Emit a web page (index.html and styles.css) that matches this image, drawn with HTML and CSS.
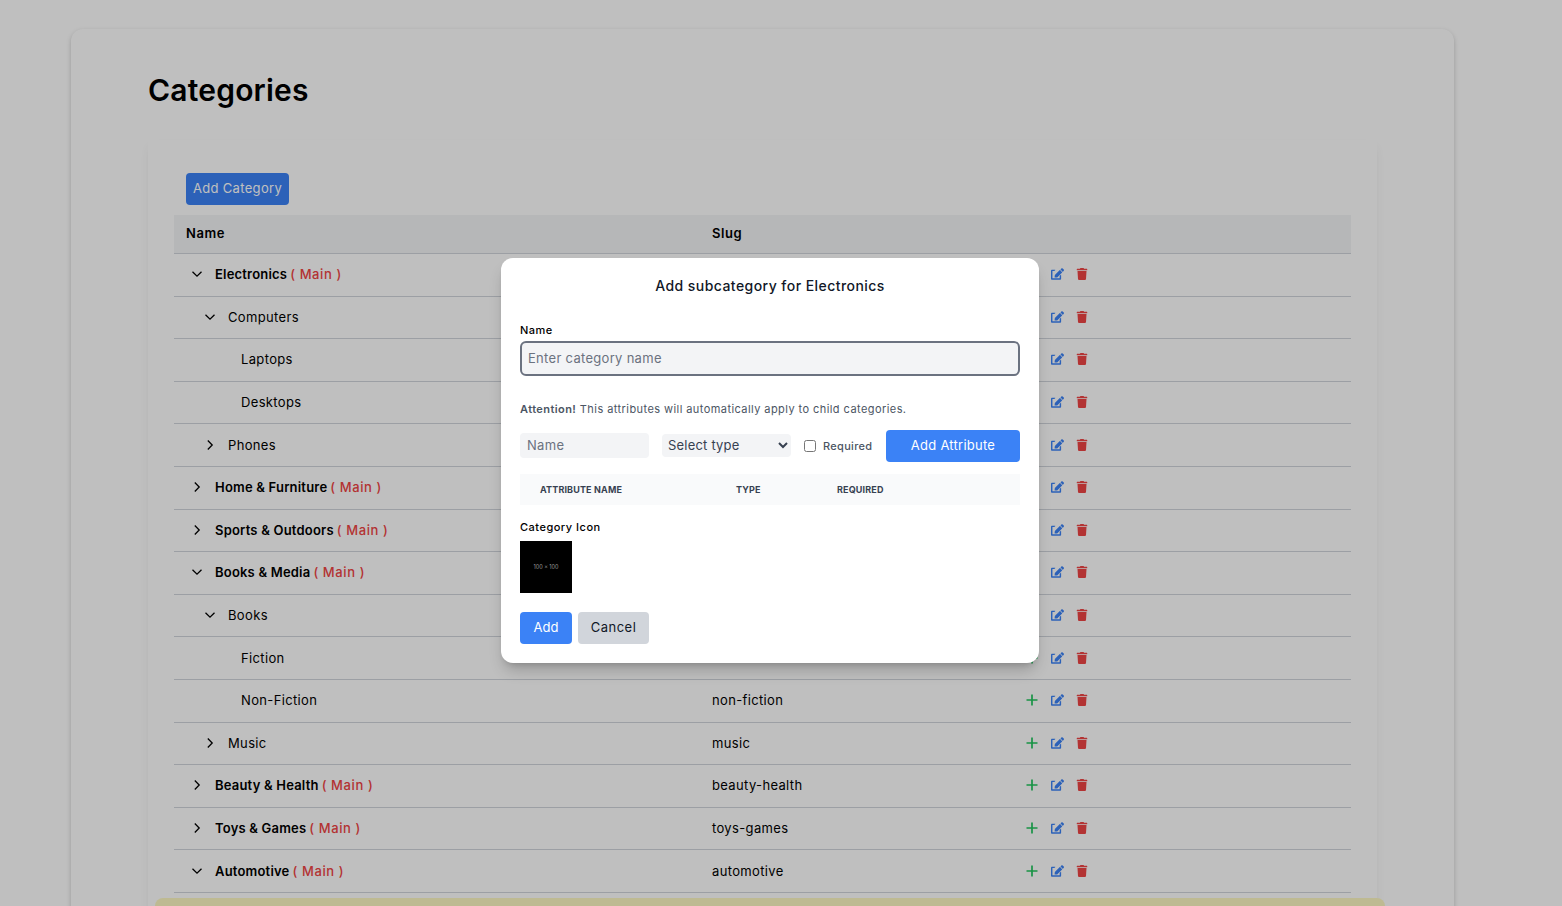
FILE: index.html
```html
<!DOCTYPE html>
<html lang="en">
<head>
<meta charset="utf-8">
<title>Categories</title>
<link rel="stylesheet" href="styles.css">
</head>
<body>
<svg class="defs" aria-hidden="true">
  <symbol id="i-plus" viewBox="0 0 12 12"><path d="M6 .5v11M.5 6h11" fill="none" stroke="currentColor" stroke-width="1.7"/></symbol>
  <symbol id="i-edit" viewBox="0 0 576 512"><path fill="currentColor" d="M402.6 83.2l90.2 90.2c3.8 3.8 3.8 10 0 13.8L274.4 405.6l-92.8 10.3c-12.4 1.4-22.9-9.1-21.5-21.5l10.3-92.8L388.8 83.2c3.8-3.8 10-3.8 13.8 0zm162-22.9l-48.8-48.8c-15.2-15.2-39.9-15.2-55.2 0l-35.4 35.4c-3.8 3.8-3.8 10 0 13.8l90.2 90.2c3.8 3.8 10 3.8 13.8 0l35.4-35.4c15.2-15.3 15.2-40 0-55.2zM384 346.2V448H64V128h73.1c3.2 0 6.2-1.3 8.5-3.5l40-40c7.6-7.6 2.2-20.5-8.5-20.5H48C21.5 64 0 85.5 0 112v352c0 26.5 21.5 48 48 48h352c26.5 0 48-21.5 48-48V306.2c0-10.7-12.9-16-20.5-8.5l-40 40c-2.2 2.3-3.5 5.3-3.5 8.5z"/></symbol>
  <symbol id="i-trash" viewBox="0 0 448 512"><path fill="currentColor" d="M432 32H312l-9.4-18.7A24 24 0 0 0 281.1 0H166.8a23.72 23.72 0 0 0-21.4 13.3L136 32H16A16 16 0 0 0 0 48v32a16 16 0 0 0 16 16h416a16 16 0 0 0 16-16V48a16 16 0 0 0-16-16zM53.2 467a48 48 0 0 0 47.9 45h245.8a48 48 0 0 0 47.9-45L416 128H32z"/></symbol>
  <symbol id="i-down" viewBox="0 0 12 12"><path d="M1.5 3.8 6 8.2l4.5-4.4" fill="none" stroke="currentColor" stroke-width="1.3"/></symbol>
  <symbol id="i-right" viewBox="0 0 12 12"><path d="M3.8 1.5 8.2 6l-4.4 4.5" fill="none" stroke="currentColor" stroke-width="1.3"/></symbol>
</svg>

<main class="page-card">
  <h1 class="page-title">Categories</h1>
  <section class="table-card">
    <button class="btn btn-blue add-category">Add Category</button>
    <table class="cat-table">
      <colgroup><col class="col-name"><col class="col-slug"><col></colgroup>
      <thead><tr><th>Name</th><th>Slug</th><th></th></tr></thead>
      <tbody>
        <tr><td><div class="cell lvl0"><svg class="chev"><use href="#i-down"/></svg><strong>Electronics</strong><span class="main-tag">( Main )</span></div></td><td>electronics</td><td><div class="acts"><svg class="plus"><use href="#i-plus"/></svg><svg class="edit"><use href="#i-edit"/></svg><svg class="trash"><use href="#i-trash"/></svg></div></td></tr>
        <tr><td><div class="cell lvl1"><svg class="chev"><use href="#i-down"/></svg><span>Computers</span></div></td><td>computers</td><td><div class="acts"><svg class="plus"><use href="#i-plus"/></svg><svg class="edit"><use href="#i-edit"/></svg><svg class="trash"><use href="#i-trash"/></svg></div></td></tr>
        <tr><td><div class="cell lvl2"><span>Laptops</span></div></td><td>laptops</td><td><div class="acts"><svg class="plus"><use href="#i-plus"/></svg><svg class="edit"><use href="#i-edit"/></svg><svg class="trash"><use href="#i-trash"/></svg></div></td></tr>
        <tr><td><div class="cell lvl2"><span>Desktops</span></div></td><td>desktops</td><td><div class="acts"><svg class="plus"><use href="#i-plus"/></svg><svg class="edit"><use href="#i-edit"/></svg><svg class="trash"><use href="#i-trash"/></svg></div></td></tr>
        <tr><td><div class="cell lvl1"><svg class="chev"><use href="#i-right"/></svg><span>Phones</span></div></td><td>phones</td><td><div class="acts"><svg class="plus"><use href="#i-plus"/></svg><svg class="edit"><use href="#i-edit"/></svg><svg class="trash"><use href="#i-trash"/></svg></div></td></tr>
        <tr><td><div class="cell lvl0"><svg class="chev"><use href="#i-right"/></svg><strong>Home &amp; Furniture</strong><span class="main-tag">( Main )</span></div></td><td>home-furniture</td><td><div class="acts"><svg class="plus"><use href="#i-plus"/></svg><svg class="edit"><use href="#i-edit"/></svg><svg class="trash"><use href="#i-trash"/></svg></div></td></tr>
        <tr><td><div class="cell lvl0"><svg class="chev"><use href="#i-right"/></svg><strong>Sports &amp; Outdoors</strong><span class="main-tag">( Main )</span></div></td><td>sports-outdoors</td><td><div class="acts"><svg class="plus"><use href="#i-plus"/></svg><svg class="edit"><use href="#i-edit"/></svg><svg class="trash"><use href="#i-trash"/></svg></div></td></tr>
        <tr><td><div class="cell lvl0"><svg class="chev"><use href="#i-down"/></svg><strong>Books &amp; Media</strong><span class="main-tag">( Main )</span></div></td><td>books-media</td><td><div class="acts"><svg class="plus"><use href="#i-plus"/></svg><svg class="edit"><use href="#i-edit"/></svg><svg class="trash"><use href="#i-trash"/></svg></div></td></tr>
        <tr><td><div class="cell lvl1"><svg class="chev"><use href="#i-down"/></svg><span>Books</span></div></td><td>books</td><td><div class="acts"><svg class="plus"><use href="#i-plus"/></svg><svg class="edit"><use href="#i-edit"/></svg><svg class="trash"><use href="#i-trash"/></svg></div></td></tr>
        <tr><td><div class="cell lvl2"><span>Fiction</span></div></td><td>fiction</td><td><div class="acts"><svg class="plus"><use href="#i-plus"/></svg><svg class="edit"><use href="#i-edit"/></svg><svg class="trash"><use href="#i-trash"/></svg></div></td></tr>
        <tr><td><div class="cell lvl2"><span>Non-Fiction</span></div></td><td>non-fiction</td><td><div class="acts"><svg class="plus"><use href="#i-plus"/></svg><svg class="edit"><use href="#i-edit"/></svg><svg class="trash"><use href="#i-trash"/></svg></div></td></tr>
        <tr><td><div class="cell lvl1"><svg class="chev"><use href="#i-right"/></svg><span>Music</span></div></td><td>music</td><td><div class="acts"><svg class="plus"><use href="#i-plus"/></svg><svg class="edit"><use href="#i-edit"/></svg><svg class="trash"><use href="#i-trash"/></svg></div></td></tr>
        <tr><td><div class="cell lvl0"><svg class="chev"><use href="#i-right"/></svg><strong>Beauty &amp; Health</strong><span class="main-tag">( Main )</span></div></td><td>beauty-health</td><td><div class="acts"><svg class="plus"><use href="#i-plus"/></svg><svg class="edit"><use href="#i-edit"/></svg><svg class="trash"><use href="#i-trash"/></svg></div></td></tr>
        <tr><td><div class="cell lvl0"><svg class="chev"><use href="#i-right"/></svg><strong>Toys &amp; Games</strong><span class="main-tag">( Main )</span></div></td><td>toys-games</td><td><div class="acts"><svg class="plus"><use href="#i-plus"/></svg><svg class="edit"><use href="#i-edit"/></svg><svg class="trash"><use href="#i-trash"/></svg></div></td></tr>
        <tr><td><div class="cell lvl0"><svg class="chev"><use href="#i-down"/></svg><strong>Automotive</strong><span class="main-tag">( Main )</span></div></td><td>automotive</td><td><div class="acts"><svg class="plus"><use href="#i-plus"/></svg><svg class="edit"><use href="#i-edit"/></svg><svg class="trash"><use href="#i-trash"/></svg></div></td></tr>
      </tbody>
    </table>
  </section>
</main>

<div class="notice"></div>
<div class="overlay"></div>

<form class="modal">
  <h2 class="modal-title">Add subcategory for Electronics</h2>
  <label class="field-label" for="cat-name">Name</label>
  <input id="cat-name" class="name-input" type="text" placeholder="Enter category name">
  <p class="attention"><b>Attention!</b> This attributes will automatically apply to child categories.</p>
  <div class="attr-row">
    <input class="attr-name" type="text" placeholder="Name">
    <select class="attr-type"><option>Select type</option></select>
    <label class="req"><input type="checkbox" class="req-box"><span>Required</span></label>
    <button type="button" class="btn btn-modal add-attr">Add Attribute</button>
  </div>
  <div class="attr-head"><span class="ah-name">Attribute Name</span><span class="ah-type">Type</span><span>Required</span></div>
  <div class="field-label icon-label">Category Icon</div>
  <div class="thumb">100 × 100</div>
  <div class="modal-actions">
    <button type="button" class="btn btn-modal add-btn">Add</button>
    <button type="button" class="btn cancel-btn">Cancel</button>
  </div>
</form>
</body>
</html>
```
FILE: styles.css
```css
html, body { margin: 0; height: 100%; overflow: hidden; }
body { background: #fff; font-family: Inter, "Noto Sans", sans-serif; color: #000; position: relative; }
.defs { position: absolute; width: 0; height: 0; }
.page-card { width: 1383px; margin: 29px 0 0 71px; padding: 42px 77px 0; box-sizing: border-box; background: #fff; border-radius: 12px; box-shadow: 0 2px 5px rgba(0,0,0,.2); height: 1200px; }
.page-title { margin: 0; font-size: 30px; line-height: 38px; font-weight: 600; letter-spacing: .2px; }
.table-card { margin-top: 31px; width: 1229px; box-sizing: border-box; padding: 33px 26px 0; box-shadow: 0 6px 10px -2px rgba(0,0,0,.08); height: 1000px; }
.btn { border: 0; font-family: inherit; cursor: pointer; border-radius: 4px; padding: 0 0 2px; }
.btn-blue { background: #3b82f6; color: #fff; }
.add-category { display: block; margin-left: 12px; width: 103px; height: 32px; font-size: 13px; letter-spacing: .33px; }
.cat-table { margin-top: 10px; width: 1177px; border-collapse: collapse; table-layout: fixed; font-size: 13px; letter-spacing: .35px; }
.col-name { width: 526px; }
.col-slug { width: 314px; }
.cat-table th { height: 36px; padding: 0 12px 2px; text-align: left; font-weight: 600; background: #f3f4f6; border-bottom: 1px solid #d1d5db; letter-spacing: .6px; }
.cat-table td { height: 40.6px; padding: 0 12px 1px; border-bottom: 1px solid #d1d5db; }
.cell { display: flex; align-items: center; }
.cell strong { font-weight: 600; letter-spacing: .2px; }
.lvl0 { padding-left: 5px; }
.lvl1 { padding-left: 18px; }
.lvl2 { padding-left: 55px; }
.chev { width: 12px; height: 12px; margin-right: 12px; flex: none; }
.main-tag { margin-left: 3px; color: #ef4444; font-weight: 500; letter-spacing: .6px; }
.acts { display: flex; align-items: center; gap: 12.5px; }
.plus { width: 12px; height: 12px; color: #22c55e; }
.edit { width: 13px; height: 12px; color: #3b82f6; }
.trash { width: 12px; height: 12px; color: #ef4444; }
.notice { position: absolute; left: 155px; top: 898px; width: 1230px; height: 40px; background: #fef9c3; border-radius: 8px 8px 0 0; }
.overlay { position: absolute; inset: 0; background: rgba(0,0,0,.25); }
.modal { position: absolute; left: 501px; top: 258px; width: 538px; height: 405px; box-sizing: border-box; padding: 18px 19px 0; background: #fff; border-radius: 12px; box-shadow: 0 10px 15px -3px rgba(0,0,0,.2), 0 4px 6px -4px rgba(0,0,0,.2); color: #111827; }
.modal-title { margin: 0; font-size: 14px; line-height: 20px; font-weight: 500; text-align: center; letter-spacing: .45px; }
.field-label { display: block; margin-top: 26px; font-size: 11px; line-height: 16px; font-weight: 500; color: #000; letter-spacing: .5px; }
.name-input { display: block; width: 500px; height: 35px; margin-top: 3px; box-sizing: border-box; padding: 0 6px 2px; border: 2px solid #6b7280; border-radius: 6px; background: #f3f4f6; font: 13px Inter, sans-serif; letter-spacing: .3px; outline: none; }
.name-input::placeholder, .attr-name::placeholder { color: #6b7280; opacity: 1; }
.attention { margin: 25px 0 0; font-size: 11px; line-height: 16px; color: #4b5563; letter-spacing: .43px; }
.attention b { font-weight: 600; }
.attr-row { display: flex; align-items: center; margin-top: 13px; height: 32px; }
.attr-name { width: 129px; height: 25px; margin-bottom: 2px; box-sizing: border-box; padding: 0 7px; border: 0; border-radius: 4px; background: #f3f4f6; font: 13px Inter, sans-serif; letter-spacing: .3px; }
.attr-type { width: 129px; height: 23px; margin-left: 13px; margin-bottom: 2px; padding: 0 2px; border: 0; border-radius: 4px; background: #f3f4f6; font: 13px Inter, sans-serif; color: #374151; letter-spacing: .2px; }
.req { display: flex; align-items: center; margin-left: 13px; font-size: 11px; color: #4b5563; font-weight: 500; width: 69px; letter-spacing: .3px; }
.req-box { width: 12px; height: 12px; margin: 0 7px 0 0; flex: none; }
.btn-modal { background: #3b82f6; color: #fff; font-size: 13px; }
.add-attr { width: 134px; height: 32px; margin-left: 13px; letter-spacing: .25px; }
.attr-head { display: flex; align-items: center; height: 31px; margin-top: 12px; padding-left: 20px; background: #f9fafb; font-size: 9px; font-weight: 700; text-transform: uppercase; color: #374151; letter-spacing: .15px; }
.ah-name { width: 196px; }
.ah-type { width: 101px; }
.icon-label { margin-top: 14px; }
.thumb { display: flex; align-items: center; justify-content: center; width: 52px; height: 52px; margin-top: 6px; background: #000; color: #999; font-size: 5.5px; }
.modal-actions { display: flex; gap: 6px; margin-top: 19px; }
.add-btn { width: 52px; height: 32px; }
.cancel-btn { width: 71px; height: 32px; background: #d1d5db; color: #111827; font-size: 13px; letter-spacing: .5px; }
```
